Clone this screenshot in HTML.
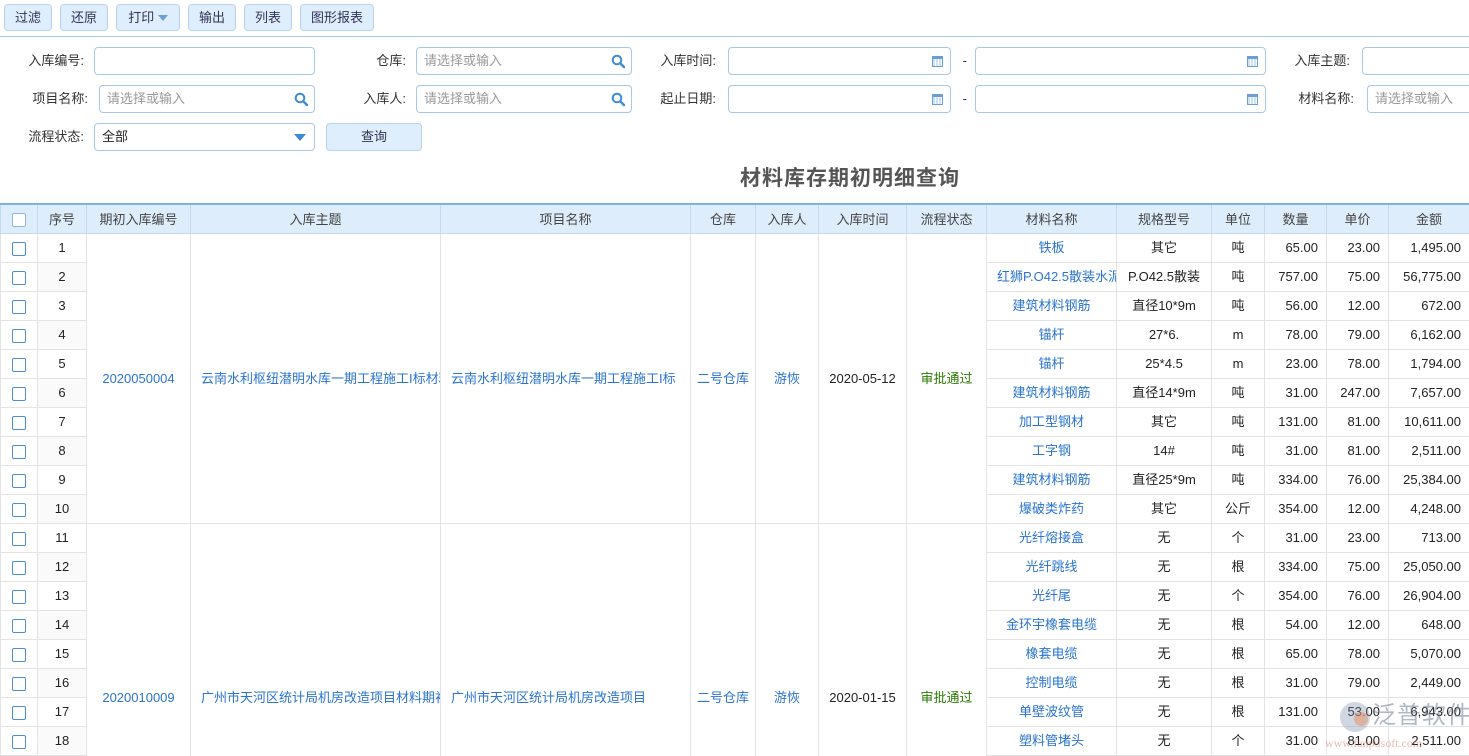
<!DOCTYPE html>
<html><head><meta charset="utf-8">
<style>
*{box-sizing:border-box;margin:0;padding:0}
body{width:1469px;height:756px;overflow:hidden;background:#fff;font-family:"Liberation Sans","Noto Sans CJK SC",sans-serif;font-size:13px;color:#222;position:relative}
.btn{position:absolute;top:4px;height:27px;background:#dfeefc;border:1px solid #b9d3ec;border-radius:4px;color:#335;font-size:13px;text-align:center;line-height:25px}
.tb{position:absolute;left:0;top:36px;width:1469px;height:1px;background:#a9c8e4}
.lbl{position:absolute;font-size:13px;color:#333;text-align:right;line-height:28px}
.inp{position:absolute;height:28px;border:1px solid #a8c8e6;border-radius:4px;background:#fff;font-size:13px;color:#999;line-height:26px;padding-left:7px}
.ic{position:absolute;right:5px;top:6px}
.cal{position:absolute;right:7px;top:8px;width:11px;height:11px;border:1px solid #6a9fd4;border-top:3px solid #6a9fd4;background:repeating-linear-gradient(90deg,#cfe2f5 0 2px,#fff 2px 3px)}
.title{position:absolute;left:0;width:1700px;top:162px;text-align:center;font-size:21px;font-weight:bold;color:#555;letter-spacing:1px}
.grid{position:absolute;left:0;top:203px;width:1469px;height:553px;overflow:hidden}
table{border-collapse:collapse;table-layout:fixed;width:1469px}
th{height:29px;background:#deedfb;border:1px solid #c5d9ec;border-top:2px solid #7fb2e3;font-weight:normal;color:#444;font-size:13px}
td{height:29px;border:1px solid #e3e3e3;text-align:center;font-size:13px;white-space:nowrap;overflow:hidden;line-height:27px;padding:0}
tr{height:29px}
td.r{text-align:right;padding-right:8px}
.a{color:#2a74d0}
.g{color:#2a7a00}
.cb{display:inline-block;width:14px;height:14px;border:1px solid #4c8fd6;border-radius:2px;vertical-align:middle;background:#fff}
tr.e td.s{background:#fafafa}
</style></head><body>
<div class="btn" style="left:4px;width:48px">过滤</div>
<div class="btn" style="left:60px;width:48px">还原</div>
<div class="btn" style="left:116px;width:64px">打印 <span style="display:inline-block;border:5px solid transparent;border-top:6px solid #6a9fd4;vertical-align:-4px"></span></div>
<div class="btn" style="left:188px;width:48px">输出</div>
<div class="btn" style="left:244px;width:48px">列表</div>
<div class="btn" style="left:300px;width:74px">图形报表</div>
<div class="tb"></div>

<div class="lbl" style="left:0;width:84px;top:47px">入库编号:</div>
<div class="inp" style="left:94px;top:47px;width:221px"></div>
<div class="lbl" style="left:300px;width:106px;top:47px">仓库:</div>
<div class="inp" style="left:416px;top:47px;width:216px">请选择或输入<svg class="ic" width="15" height="15" viewBox="0 0 15 15"><circle cx="6" cy="6" r="4.3" fill="none" stroke="#3d8ad8" stroke-width="2"/><path d="M9.3 9.3L13 13" stroke="#3d8ad8" stroke-width="2.4" stroke-linecap="round"/></svg></div>
<div class="lbl" style="left:630px;width:86px;top:47px">入库时间:</div>
<div class="inp" style="left:728px;top:47px;width:223px"><span class="cal"></span></div>
<div class="lbl" style="left:955px;width:12px;top:47px">-</div>
<div class="inp" style="left:975px;top:47px;width:291px"><span class="cal"></span></div>
<div class="lbl" style="left:1270px;width:80px;top:47px">入库主题:</div>
<div class="inp" style="left:1362px;top:47px;width:120px"></div>

<div class="lbl" style="left:0;width:88px;top:85px">项目名称:</div>
<div class="inp" style="left:99px;top:85px;width:216px">请选择或输入<svg class="ic" width="15" height="15" viewBox="0 0 15 15"><circle cx="6" cy="6" r="4.3" fill="none" stroke="#3d8ad8" stroke-width="2"/><path d="M9.3 9.3L13 13" stroke="#3d8ad8" stroke-width="2.4" stroke-linecap="round"/></svg></div>
<div class="lbl" style="left:300px;width:106px;top:85px">入库人:</div>
<div class="inp" style="left:416px;top:85px;width:216px">请选择或输入<svg class="ic" width="15" height="15" viewBox="0 0 15 15"><circle cx="6" cy="6" r="4.3" fill="none" stroke="#3d8ad8" stroke-width="2"/><path d="M9.3 9.3L13 13" stroke="#3d8ad8" stroke-width="2.4" stroke-linecap="round"/></svg></div>
<div class="lbl" style="left:630px;width:86px;top:85px">起止日期:</div>
<div class="inp" style="left:728px;top:85px;width:223px"><span class="cal"></span></div>
<div class="lbl" style="left:955px;width:12px;top:85px">-</div>
<div class="inp" style="left:975px;top:85px;width:291px"><span class="cal"></span></div>
<div class="lbl" style="left:1270px;width:84px;top:85px">材料名称:</div>
<div class="inp" style="left:1367px;top:85px;width:120px">请选择或输入</div>

<div class="lbl" style="left:0;width:84px;top:123px">流程状态:</div>
<div class="inp" style="left:94px;top:123px;width:221px;color:#222">全部<span style="position:absolute;right:8px;top:10px;border:6px solid transparent;border-top:7px solid #3d8ad8;border-bottom:0"></span></div>
<div class="btn" style="left:326px;top:123px;width:96px;height:28px;line-height:26px">查询</div>

<div class="title">材料库存期初明细查询</div>

<div class="grid"><table>
<colgroup><col style="width:37px"><col style="width:49px"><col style="width:104px"><col style="width:250px"><col style="width:250px"><col style="width:65px"><col style="width:63px"><col style="width:88px"><col style="width:80px"><col style="width:130px"><col style="width:95px"><col style="width:53px"><col style="width:62px"><col style="width:62px"><col style="width:81px"></colgroup>
<tr><th><span class="cb" style="border-color:#8fb8e0"></span></th><th>序号</th><th>期初入库编号</th><th>入库主题</th><th>项目名称</th><th>仓库</th><th>入库人</th><th>入库时间</th><th>流程状态</th><th>材料名称</th><th>规格型号</th><th>单位</th><th>数量</th><th>单价</th><th>金额</th></tr>
<tr><td><span class="cb"></span></td><td class="s">1</td><td rowspan="10" class="a">2020050004</td><td rowspan="10" class="a" style="text-align:left;padding-left:10px">云南水利枢纽潜明水库一期工程施工I标材料</td><td rowspan="10" class="a" style="text-align:left;padding-left:10px">云南水利枢纽潜明水库一期工程施工I标</td><td rowspan="10" class="a">二号仓库</td><td rowspan="10" class="a">游恢</td><td rowspan="10">2020-05-12</td><td rowspan="10" class="g">审批通过</td><td class="a">铁板</td><td>其它</td><td>吨</td><td class="r">65.00</td><td class="r">23.00</td><td class="r">1,495.00</td></tr>
<tr class="e"><td><span class="cb"></span></td><td class="s">2</td><td class="a" style="text-align:left;padding-left:10px">红狮P.O42.5散装水泥</td><td>P.O42.5散装</td><td>吨</td><td class="r">757.00</td><td class="r">75.00</td><td class="r">56,775.00</td></tr>
<tr><td><span class="cb"></span></td><td class="s">3</td><td class="a">建筑材料钢筋</td><td>直径10*9m</td><td>吨</td><td class="r">56.00</td><td class="r">12.00</td><td class="r">672.00</td></tr>
<tr class="e"><td><span class="cb"></span></td><td class="s">4</td><td class="a">锚杆</td><td>27*6.</td><td>m</td><td class="r">78.00</td><td class="r">79.00</td><td class="r">6,162.00</td></tr>
<tr><td><span class="cb"></span></td><td class="s">5</td><td class="a">锚杆</td><td>25*4.5</td><td>m</td><td class="r">23.00</td><td class="r">78.00</td><td class="r">1,794.00</td></tr>
<tr class="e"><td><span class="cb"></span></td><td class="s">6</td><td class="a">建筑材料钢筋</td><td>直径14*9m</td><td>吨</td><td class="r">31.00</td><td class="r">247.00</td><td class="r">7,657.00</td></tr>
<tr><td><span class="cb"></span></td><td class="s">7</td><td class="a">加工型钢材</td><td>其它</td><td>吨</td><td class="r">131.00</td><td class="r">81.00</td><td class="r">10,611.00</td></tr>
<tr class="e"><td><span class="cb"></span></td><td class="s">8</td><td class="a">工字钢</td><td>14#</td><td>吨</td><td class="r">31.00</td><td class="r">81.00</td><td class="r">2,511.00</td></tr>
<tr><td><span class="cb"></span></td><td class="s">9</td><td class="a">建筑材料钢筋</td><td>直径25*9m</td><td>吨</td><td class="r">334.00</td><td class="r">76.00</td><td class="r">25,384.00</td></tr>
<tr class="e"><td><span class="cb"></span></td><td class="s">10</td><td class="a">爆破类炸药</td><td>其它</td><td>公斤</td><td class="r">354.00</td><td class="r">12.00</td><td class="r">4,248.00</td></tr>
<tr><td><span class="cb"></span></td><td class="s">11</td><td rowspan="12" class="a">2020010009</td><td rowspan="12" class="a" style="text-align:left;padding-left:10px">广州市天河区统计局机房改造项目材料期初</td><td rowspan="12" class="a" style="text-align:left;padding-left:10px">广州市天河区统计局机房改造项目</td><td rowspan="12" class="a">二号仓库</td><td rowspan="12" class="a">游恢</td><td rowspan="12">2020-01-15</td><td rowspan="12" class="g">审批通过</td><td class="a">光纤熔接盒</td><td>无</td><td>个</td><td class="r">31.00</td><td class="r">23.00</td><td class="r">713.00</td></tr>
<tr class="e"><td><span class="cb"></span></td><td class="s">12</td><td class="a">光纤跳线</td><td>无</td><td>根</td><td class="r">334.00</td><td class="r">75.00</td><td class="r">25,050.00</td></tr>
<tr><td><span class="cb"></span></td><td class="s">13</td><td class="a">光纤尾</td><td>无</td><td>个</td><td class="r">354.00</td><td class="r">76.00</td><td class="r">26,904.00</td></tr>
<tr class="e"><td><span class="cb"></span></td><td class="s">14</td><td class="a">金环宇橡套电缆</td><td>无</td><td>根</td><td class="r">54.00</td><td class="r">12.00</td><td class="r">648.00</td></tr>
<tr><td><span class="cb"></span></td><td class="s">15</td><td class="a">橡套电缆</td><td>无</td><td>根</td><td class="r">65.00</td><td class="r">78.00</td><td class="r">5,070.00</td></tr>
<tr class="e"><td><span class="cb"></span></td><td class="s">16</td><td class="a">控制电缆</td><td>无</td><td>根</td><td class="r">31.00</td><td class="r">79.00</td><td class="r">2,449.00</td></tr>
<tr><td><span class="cb"></span></td><td class="s">17</td><td class="a">单壁波纹管</td><td>无</td><td>根</td><td class="r">131.00</td><td class="r">53.00</td><td class="r">6,943.00</td></tr>
<tr class="e"><td><span class="cb"></span></td><td class="s">18</td><td class="a">塑料管堵头</td><td>无</td><td>个</td><td class="r">31.00</td><td class="r">81.00</td><td class="r">2,511.00</td></tr>
<tr><td><span class="cb"></span></td><td class="s">19</td><td class="a">网线</td><td>无</td><td>根</td><td class="r">54.00</td><td class="r">12.00</td><td class="r">648.00</td></tr>
<tr class="e"><td><span class="cb"></span></td><td class="s">20</td><td class="a">网线</td><td>无</td><td>根</td><td class="r">54.00</td><td class="r">12.00</td><td class="r">648.00</td></tr>
<tr><td><span class="cb"></span></td><td class="s">21</td><td class="a">网线</td><td>无</td><td>根</td><td class="r">54.00</td><td class="r">12.00</td><td class="r">648.00</td></tr>
<tr class="e"><td><span class="cb"></span></td><td class="s">22</td><td class="a">网线</td><td>无</td><td>根</td><td class="r">54.00</td><td class="r">12.00</td><td class="r">648.00</td></tr>
</table></div>

<div style="position:absolute;left:1340px;top:702px;width:30px;height:30px;border-radius:50%;background:rgba(120,140,170,0.35)"></div>
<div style="position:absolute;left:1354px;top:712px;width:14px;height:14px;border-radius:50%;background:rgba(230,140,100,0.5)"></div>
<div style="position:absolute;left:1372px;top:701px;font-size:24px;line-height:30px;white-space:nowrap;color:rgba(110,125,150,0.55);letter-spacing:1px">泛普软件</div>
<div style="position:absolute;left:1325px;top:736px;font-size:12px;line-height:14px;white-space:nowrap;color:rgba(200,100,80,0.45);font-family:'Liberation Serif',serif">www.fanpusoft.com</div>
</body></html>
